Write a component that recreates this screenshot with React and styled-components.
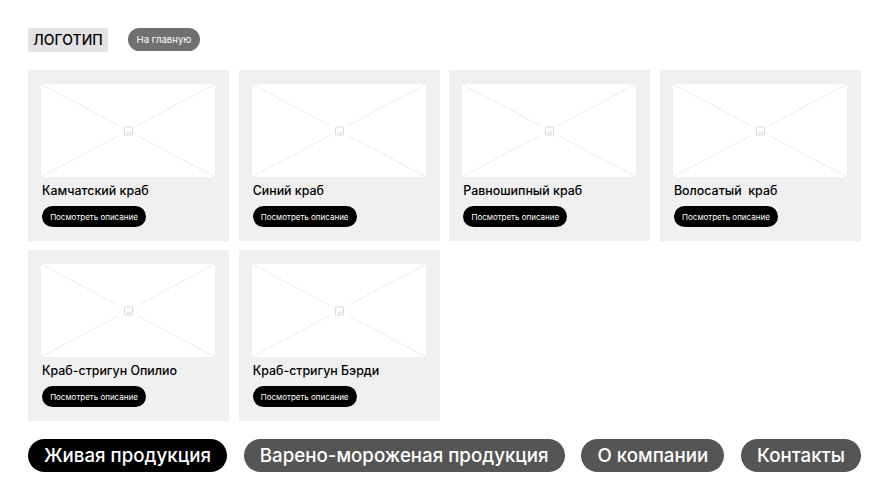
import React from "react";
import styled, { createGlobalStyle } from "styled-components";

const GlobalStyle = createGlobalStyle`
    html, body {
        margin: 0;
        padding: 0;
        background: #fff;
        font-family: Inter, "Noto Sans", sans-serif;
    }
`;

const Page = styled.div`
    width: 889px;
    height: 500px;
    box-sizing: border-box;
    padding: 28px 28px 0;
    overflow: hidden;
`;

const Header = styled.header`
    display: flex;
    align-items: flex-start;
    gap: 20px;
`;

const Logo = styled.div`
    width: 80px;
    height: 24px;
    background: #e3e3e3;
    color: #000;
    font-size: 14px;
    font-weight: 500;
    line-height: 24px;
    text-align: center;
`;

const HomeButton = styled.button`
    width: 72px;
    height: 23px;
    padding: 0;
    border: 0;
    border-radius: 12px;
    background: #707070;
    color: #fff;
    font: 400 9.6px/23px Inter, sans-serif;
`;

const Grid = styled.main`
    display: grid;
    grid-template-columns: repeat(4, 201px);
    grid-auto-rows: 171px;
    column-gap: 9.67px;
    row-gap: 9px;
    margin-top: 18px;
`;

const Card = styled.article`
    box-sizing: border-box;
    padding: 14px 14px 0 13px;
    background: #f0f0f0;
`;

const Picture = styled.div`
    display: block;
    width: 174px;
    height: 93px;
    background: #fff;
`;

const PictureSvg = styled.svg`
    display: block;
`;

const Title = styled.h3`
    margin: 6px 0 0 1px;
    color: #000;
    font-size: 12.4px;
    font-weight: 500;
    line-height: 15px;
    white-space: pre;
`;

const DescriptionButton = styled.button`
    display: block;
    width: 104px;
    height: 21px;
    margin: 8px 0 0 1px;
    padding: 1px 0 0;
    border: 0;
    border-radius: 11px;
    background: #000;
    color: #fff;
    font: 400 8px/20px Inter, sans-serif;
`;

const Nav = styled.nav`
    display: flex;
    justify-content: space-between;
    margin-top: 18px;
`;

const NavButton = styled.button`
    height: 33px;
    padding: 1px 16px 0;
    border: 0;
    border-radius: 17px;
    background: ${({ $active }) => ($active ? "#000" : "#555")};
    color: #fff;
    font: 500 18.7px/32px Inter, sans-serif;
    white-space: nowrap;
`;

const crabs = [
    "Камчатский краб",
    "Синий краб",
    "Равношипный краб",
    "Волосатый  краб",
    "Краб-стригун Опилио",
    "Краб-стригун Бэрди",
];

const navItems = ["Живая продукция", "Варено-мороженая продукция", "О компании", "Контакты"];

function Placeholder() {
    return (
        <Picture>
            <PictureSvg width="174" height="93" viewBox="0 0 174 93" fill="none">
                <path d="M0 0L77 41M174 0L97 41M0 93L77 52M174 93L97 52" stroke="#f0f0f0" strokeWidth="1.2" />
                <rect x="83.5" y="43" width="8" height="8" rx="1" stroke="#d8d8d8" strokeWidth="1" />
                <path d="M85.5 49h4M89 47.5v1.5" stroke="#c8c8c8" strokeWidth="0.8" />
            </PictureSvg>
        </Picture>
    );
}

export default function App() {
    return (
        <>
            <GlobalStyle />
            <Page>
                <Header>
                    <Logo>ЛОГОТИП</Logo>
                    <HomeButton>На главную</HomeButton>
                </Header>
                <Grid>
                    {crabs.map((name) => (
                        <Card key={name}>
                            <Placeholder />
                            <Title>{name}</Title>
                            <DescriptionButton>Посмотреть описание</DescriptionButton>
                        </Card>
                    ))}
                </Grid>
                <Nav>
                    {navItems.map((item, i) => (
                        <NavButton key={item} $active={i === 0}>{item}</NavButton>
                    ))}
                </Nav>
            </Page>
        </>
    );
}
